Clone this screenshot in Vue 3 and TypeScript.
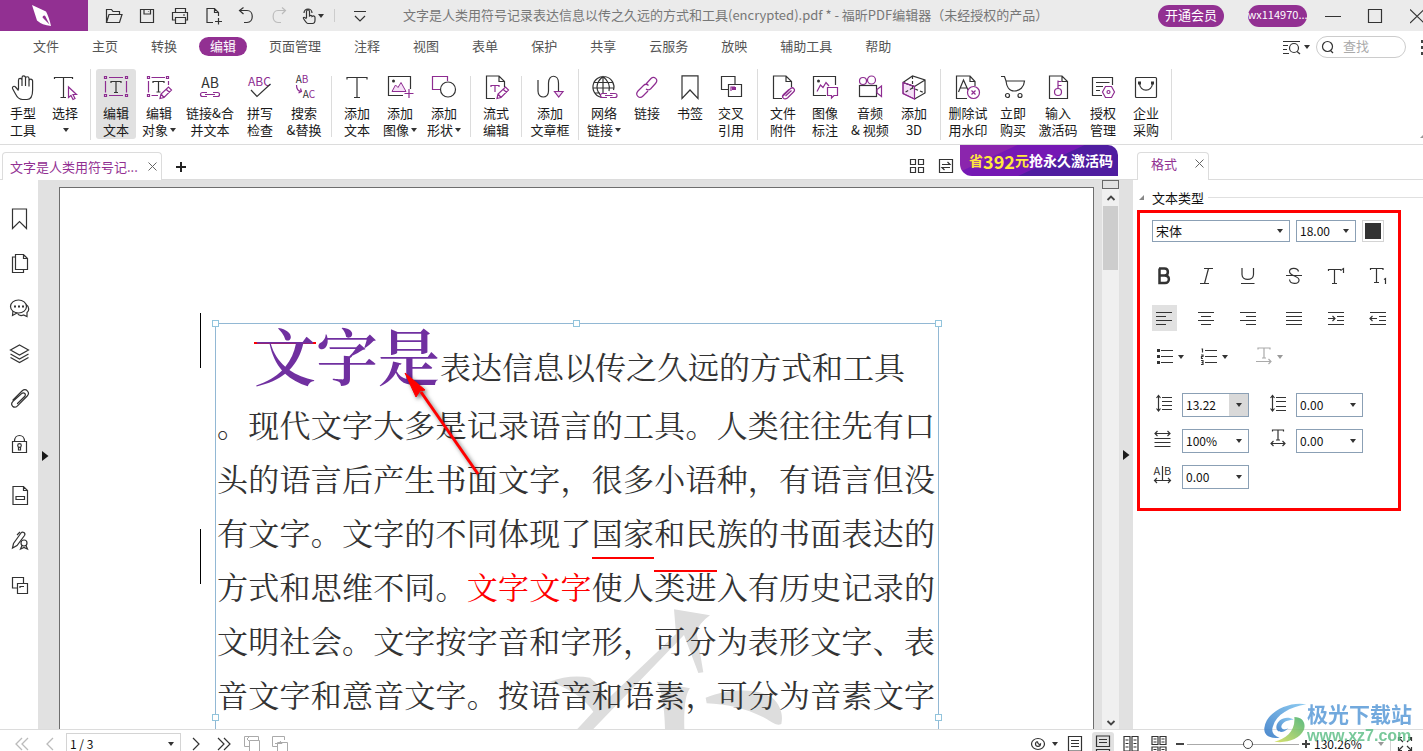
<script setup lang="ts">
import { ref } from 'vue'

interface Tool { icon: string; l1: string; l2?: string; w: number; drop?: boolean; active?: boolean }
interface Group { tools: Tool[]; short?: boolean; first?: boolean }

const K = 'stroke="#333" stroke-width="1.2" fill="none"'
const P = 'stroke="#8e2c91" stroke-width="1.2" fill="none"'
const BIGT = `<path ${K} d="M3 4.500V2.500H23V4.500M13 2.500V22.500M10 22.500H16"/>`
const PENCIL = `<path stroke="#8e2c91" stroke-width="1.200" fill="#fff" d="M14 23.500L15 19L22.500 12L25.500 15L18 22.500ZM15 19L18 22.500M20 14L23.500 17.500"/>`
const PAGE = `<path ${K} d="M12 23.500H3.500V1H16L21.500 6.500V12M16 1V6.500H21.500"/>`

const icons: Record<string, string> = {
  hand: `<path ${K} stroke-linejoin="round" d="M8.500 14.500V5.200a1.750 1.750 0 0 1 3.500 0V11M12 5V2.700a1.750 1.750 0 0 1 3.500 0V11M15.500 3.500a1.750 1.750 0 0 1 3.500 0V11.500M19 6a1.800 1.800 0 0 1 3.600 0V15C22.600 20 21.500 24.500 17 24.500H12.500C8.500 24.500 7 22 5.500 19L2.500 13.500C2 11.500 4.200 10.500 5.500 12L8.500 15.500"/>`,
  select: `<path ${K} d="M2.500 4V2.500H20.500V4M11.500 2.500V22.500M8.500 22.500H14"/><path stroke="#8e2c91" stroke-width="1.200" fill="#fff" d="M16.500 12V22.500L19 20.500L21 24.500L23 23.500L21 19.500H24.500Z"/>`,
  editText: `<path ${P} d="M6 2.500H20M6 20.500H20M2.500 6V17.500M23.500 6V17.500"/><path ${P} d="M1.500 1.500h2v2h-2zM22.500 1.500h2v2h-2zM1.500 19.500h2v2h-2zM22.500 19.500h2v2h-2z"/><path ${K} d="M8 8V6.500H18V8M13 6.500V17M11 17.500H15"/>`,
  editObj: `<path ${P} d="M5.500 2.500H19M2.500 6V17.500M5.500 20.500H12M22.500 6V10"/><path ${P} d="M1.500 1.500h2v2h-2zM20.500 1.500h2v2h-2zM1.500 19.500h2v2h-2z"/><path ${K} d="M7 8V6.500H18V8M12.500 6.500V17M10.500 17H14.500"/>${PENCIL}`,
  linkMerge: `<text x="13" y="12.500" text-anchor="middle" font-size="14" fill="#333" font-family="Noto Sans CJK SC">AB</text><path ${P} d="M10 17.500H5.500a2 2 0 0 0 0 4H10M16 17.500h4.500a2 2 0 0 1 0 4H16M8 19.500H18"/>`,
  spell: `<text x="12.500" y="11" text-anchor="middle" font-size="12" fill="#8e2c91" font-family="Noto Sans CJK SC">ABC</text><path ${K} d="M4 15L10 21.500L23.500 9"/>`,
  replace: `<text x="11" y="8" text-anchor="middle" font-size="10" fill="#333" font-family="Noto Sans CJK SC">A<tspan fill="#8e2c91">B</tspan></text><text x="18" y="23" text-anchor="middle" font-size="10" fill="#333" font-family="Noto Sans CJK SC">A<tspan fill="#8e2c91">C</tspan></text><path ${P} d="M5.500 10C5.500 13 6.500 16 10 16.500M7.500 18L10.500 16.500L9.500 13.500"/>`,
  bigT: BIGT,
  addImg: `<path ${K} d="M16 20.500H1.500V1.500H23.500V14"/><circle cx="6.500" cy="6" r="1.500" fill="#333"/><path stroke="#8e2c91" fill="#f5e0f7" d="M5 16.500L8.500 10L11 12.500L14 7.500L19 16.500Z"/><path ${P} stroke-width="1.500" d="M22 14V23M17.500 18.500H26.500"/>`,
  addShape: `<path ${P} d="M10 14.500H1.500V1.500H16.500V6"/><circle cx="17" cy="14.500" r="7.500" stroke="#333" stroke-width="1.200" fill="#fff"/>`,
  flow: `${PAGE}<path ${P} d="M8 12V10.500H16V12M12 10.500V16M12 16V17"/>${PENCIL}`,
  article: `<path ${K} d="M1 5V16C1 24 11.500 24 11.500 16V8C11.500 -1 21.500 -1 21.500 8V16"/><path stroke="#8e2c91" stroke-width="1.200" fill="#f5e0f7" d="M17.500 16.500H26L21.700 22Z"/>`,
  web: `<path ${K} d="M12 22.500A10.500 10.500 0 1 1 22.500 15M12 22.500C4 16 4 8 12 1.500C20 8 18.500 14 18 16M12 1.500V22M3 7.500H22M1.500 13H22M3.500 18H9"/><path stroke="#8e2c91" stroke-width="1.200" fill="#fff" d="M16 18.500H11.500a2 2 0 0 0 0 4H16M19 18.500h5a2 2 0 0 1 0 4H19M14 20.500H21.500"/>`,
  link: `<path ${P} stroke-width="1.500" d="M12 9L17 3.500C20 .5 25 4.500 21.500 8.500L16.500 14C15 15.200 13.500 15.200 12 14M14.500 10.500C13 9 11 9 9.500 10.500L4 16C.5 20 5.500 24.500 9 21L14 16"/>`,
  bookmark: `<path ${K} stroke-width="1.400" d="M5 .8H21V23.500L13 15L5 23.500Z"/>`,
  cross: `<path ${K} d="M10 14.500H3.500V1.500H17V9M10.500 9.500H23.500V21.500H10.500Z"/><path ${P} d="M17 12H13V16"/><path fill="#8e2c91" d="M14 12h4v3h-4z"/>`,
  attach: `${PAGE}<path ${P} stroke-width="1" d="M13 21L20.500 13.500C23 11.500 26 14.500 23.500 17L17.500 23C14 25.500 11 22 13.500 19.500L19 14.500M15.500 21L21.500 15.500"/>`,
  imgNote: `<path ${K} d="M14 20.500H1.500V1.500H23.500V10"/><circle cx="6.500" cy="6" r="1.500" fill="#333"/><path ${P} d="M5 16.500L8.500 10L11 12.500L14 7.500L17 11"/><path stroke="#8e2c91" stroke-width="1.200" fill="#fff" d="M15.500 12.500H25.500V20.500H22L19.500 23V20.500H15.500Z"/>`,
  video: `<circle cx="6" cy="6" r="3.500" ${P}/><circle cx="14.500" cy="5" r="4" ${P}/><rect x="2.500" y="10.500" width="17" height="11" ${K}/><path ${P} d="M20 14.500L24.500 11V21.500L20 18Z"/>`,
  cube: `<path fill="#f5e0f7" stroke="#8e2c91" d="M2 7.500L13.500 11.500V24L2 18.500Z"/><path ${K} d="M2 7.500L11.500 1L24 5V18L13.500 24M13.500 11.500L24 5M2 7.500L13.500 11.500"/><path ${K} stroke-dasharray="3 2" d="M11.500 1V13L24 18M11.500 13L2 18.500"/><path ${P} d="M2 7.500L13.500 11.500V24L2 18.500Z"/>`,
  rmMark: `<path ${K} d="M12 23.500H1.500V1H15L20 6.500V11M15 1V6.500H20M3.500 17L8.500 5L13 15M5 13H12"/><circle cx="18.500" cy="17.500" r="6" stroke="#8e2c91" stroke-width="1.200" fill="#fff"/><path ${P} d="M16.500 15.500L20.500 19.500M20.500 15.500L16.500 19.500"/>`,
  cart: `<path ${K} d="M1 1.500H4.500L6 6H24.500C24 12 20 16 14 16C9 16 6.500 11 6 6"/><circle cx="7.500" cy="20.500" r="2" ${K}/><circle cx="20" cy="20.500" r="2" ${K}/>`,
  code: `<path ${K} d="M4.500 1H17L22.500 6.500V23.500H4.500ZM17 1V6.500H22.500"/><circle cx="13" cy="17" r="3.500" ${P}/><path ${P} d="M13 13.500V5.500M13 6.500H16.500M13 10.500H16.500"/>`,
  auth: `<path ${K} d="M12 20.500H2.500V2.500H22.500V10M6 7.500H19.500M6 11.500H13M6 15.500H10"/><path stroke="#8e2c91" stroke-width="1.200" fill="#fff" d="M15.500 11.500H21.500L24.500 17L21.500 22.500H15.500L12.500 17Z"/><circle cx="18.500" cy="17" r="1.500" ${P}/>`,
  shop: `<rect x="2.500" y="2.500" width="21" height="20" rx="1" ${K}/><path ${K} d="M6.500 8C6.500 17.500 19.500 17.500 19.500 8"/><path fill="#333" d="M5 6.500h3v3h-3zM18 6.500h3v3h-3z"/>`,
  open: `<path ${K} d="M2.500 16V3.500H7.500L9 5.500H15.500V8M2.500 16.500L5 8.500H18L15.500 16.500Z"/>`,
  save: `<path ${K} d="M3.500 3.500H16.500V16.500H3.500ZM7 3.500V8H13.500V3.500M11.500 5.500V6"/>`,
  print: `<path ${K} d="M5.500 6.500V2.500H15.500V6.500M5.500 14H2.500V6.500H17.500V14H15.500M5.500 11.500H15.500V17.500H5.500ZM13 9H15"/>`,
  newDoc: `<path ${K} d="M10 16.500H4V2.500H11.500L15.500 6.500V10M11.500 2.500V6.500H15.500M15.500 12V18.500M12 15.500H19"/>`,
  undo: `<path ${K} stroke-width="1.400" d="M7.500 1.500L3.500 4.500L7.500 8M3.500 4.500H11C18 4.500 18 16.500 11 16.500H8"/>`,
  redo: `<path stroke="#bbb" stroke-width="1.200" fill="none" d="M13 1.500L16.500 4.500L13 8M16.500 4.500H9C2.500 4.500 2.500 16.500 9 16.500H12"/>`,
  touch: `<path ${K} d="M8.500 12V5.500a1.500 1.500 0 0 1 3 0V10C13 9 14 9.500 14 10.500C15.500 9.500 17 10 17 11.500V14C17 16 16 17.500 14.500 17.500H10C8.500 17.500 7 15 5.500 12.500C5 11 6.500 10.500 8.500 13M6 7A4 4 0 1 1 14 7"/>`,
  qmenu: `<path ${K} d="M4 5.500H16M5 10L10 15L15 10"/>`,
  sMark: `<path ${K} d="M3.500 1H17.500V20.500L10.500 13.500L3.500 20.500Z"/>`,
  sPages: `<path ${K} d="M6 4H3.500V19.500H14.500V17M6.500 1.500H14.500L18.500 5.500V16.500H6.500ZM14.500 1.500V5.500H18.500"/>`,
  sChat: `<ellipse cx="9.500" cy="8.500" rx="8" ry="6.500" ${K}/><path ${K} d="M4 13L3.500 17.500L8 15M17 6.500C21 9 20 13 18 14.500V18.500L14.500 17C12 18 9.500 17 8.500 15.500"/><path stroke="#333" stroke-width="2" stroke-dasharray="2 2" d="M5 8.500H15"/>`,
  sLayers: `<path ${K} d="M10.500 2L19.500 7L10.500 12L1.500 7ZM1.500 11L10.500 16L19.500 11M1.500 14.500L10.500 19.500L19.500 14.500"/>`,
  sClip: `<path ${K} stroke-linecap="round" d="M4 12L13 3C15 1.300 17 1.500 18.300 2.800C19.700 4.200 19.800 6.300 18.200 8L8.500 17.800C7 19.300 5 19.500 3.600 18.200C2.200 16.800 2.500 14.900 4 13.400L12.600 5.600C13.600 4.700 15 4.700 15.800 5.500C16.600 6.300 16.500 7.600 15.600 8.500L8.500 15.500"/>`,
  sLock: `<path ${K} d="M3.500 8.500H17.500V19.500H3.500ZM5.500 8.500C5.500 .5 15.500 .5 15.500 8.500"/><circle cx="10.500" cy="12.500" r="1.800" ${K}/><path ${K} d="M9.500 14V17H11.500V14"/>`,
  sForm: `<path ${K} d="M4 1.500H14.500L18.500 5.500V19.500H4ZM14.500 1.500V5.500H18.500M7 11.500H15.500V14.500H7Z"/>`,
  sSign: `<path ${K} d="M3.500 18L4.500 13.500L12 3C13.500 1 17 3 15.500 5.500L8 15.500ZM8 5L11 2"/><circle cx="15" cy="13" r="3" ${K}/><path ${K} d="M13 15.500L11.500 19L15 17.500L18.500 19L17 15.500"/>`,
  sCopy: `<path ${K} d="M8 13H3.500V2.500H14.500V8M8.500 8.500H18.500V18.500H8.500ZM11 13V11.500H15"/>`,
  bold: `<path fill="none" stroke="#333" stroke-width="2.500" d="M7 4.500H12.500C17 4.500 17 11.500 12.500 11.500H7.500M12.500 11.500C18.500 11.500 18 19 13 19H7.500V4.500"/>`,
  italic: `<path ${K} d="M10 4.500H19M6 19.500H15M14.500 4.500L10.500 19.500"/>`,
  under: `<path ${K} d="M6 4V10.500C6 17 17.500 17 17.500 10.500V4M5 19.500H18.500"/>`,
  strike: `<path ${K} d="M16.500 7.500C15.500 3 7.500 3.500 7.500 7.500C7.500 10 10 11 12.500 12C15 13 17.500 14 17 16.500C16.500 20.500 8 20.500 7.500 15.500M4 11.500H20"/>`,
  sup: `<path ${K} d="M4.500 7V5.500H17V7M10.500 5.500V19.500M8 19.500H13M18 5.500L19.500 4.500V9"/>`,
  sub: `<path ${K} d="M4.500 6V4.500H17V6M10.500 4.500V18.500M8 18.500H13M18 15.500L19.500 14.500V20"/>`,
  left: `<path ${K} d="M4 6.500H20M4 10.500H14M4 14.500H20M4 18.500H14"/>`,
  center: `<path ${K} d="M4 6.500H20M7 10.500H17M4 14.500H20M7 18.500H17"/>`,
  right: `<path ${K} d="M4 6.500H20M10 10.500H20M4 14.500H20M10 18.500H20"/>`,
  justify: `<path ${K} d="M4 6.500H20M4 10.500H20M4 14.500H20M4 18.500H20"/>`,
  indent: `<path ${K} d="M4 6.500H20M13 10.500H20M13 14.500H20M4 18.500H20M4 12.500H11M8.500 10L11 12.500L8.500 15"/>`,
  outdent: `<path ${K} d="M4 6.500H20M13 10.500H20M13 14.500H20M4 18.500H20M4 12.500H11M6.500 10L4 12.500L6.500 15"/>`,
  bullets: `<path ${K} d="M8 5.500H20M8 11.500H20M8 17.500H20"/><path fill="#333" d="M4 4h3v3H4zM4 10h3v3H4zM4 16h3v3H4z"/>`,
  numbers: `<path ${K} d="M8 5.500H20M8 11.500H20M8 17.500H20M4.500 4H5.500V7.500M4 10H6V11.500H4.500V13.500H6M4 15.500H6V19.500H4M4.500 17.500H6"/>`,
  tdir: `<path stroke="#aaa" stroke-width="1.200" fill="none" d="M6 4.500V3H18V4.500M12 3V13M10 13H14M4 16.500H19M16.500 14L19 16.500L16.500 19"/>`,
  lineH: `<path ${K} d="M10 4.500H20M10 8.500H20M10 12.500H20M10 16.500H20M6.500 3V17.500M4.500 5L6.500 2.500L8.500 5M4.500 15.500L6.500 18L8.500 15.500"/>`,
  paraH: `<path ${K} d="M10 4.500H20M10 8.500H20M10 13.500H20M10 17.500H20M6.500 3V17.500M4.500 5L6.500 2.500L8.500 5M4.500 15.500L6.500 18L8.500 15.500"/>`,
  scaleH: `<path ${K} d="M2.500 9.500H18.500M2.500 13.500H18.500M2.500 17.500H18.500M3 4.500H18M5.500 2L3 4.500L5.500 7M15.500 2L18 4.500L15.500 7"/>`,
  charS: `<path ${K} d="M6.500 2.500V1H17.500V2.500M12 1V11M10 11H14M5 14.500H19M7.500 12L5 14.500L7.500 17M16.500 12L19 14.500L16.500 17"/>`,
  wordS: `<text x="1.500" y="10" font-size="11" fill="#333" font-family="Noto Sans CJK SC">A</text><text x="12" y="10" font-size="11" fill="#333" font-family="Noto Sans CJK SC">B</text><path ${K} d="M10.500 1V15M2.500 15.500H18.500M5 13L2.500 15.500L5 18M16 13L18.500 15.500L16 18"/>`,
  first: `<path stroke="#bbb" stroke-width="1.300" fill="none" d="M10 4L4 10L10 16M16 4L10 10L16 16"/>`,
  prev: `<path stroke="#bbb" stroke-width="1.300" fill="none" d="M13 4L7 10L13 16"/>`,
  next: `<path ${K} stroke-width="1.500" d="M7 4L13 10L7 16"/>`,
  last: `<path ${K} stroke-width="1.500" d="M4 4L10 10L4 16M10 4L16 10L10 16"/>`,
  back: `<path stroke="#aaa" fill="none" d="M7 12.500H2.500V2.500H16.500V6M7.500 6.500H17.500V18H7.500ZM5 5L7 3M5 5L7 7"/>`,
  forth: `<path stroke="#aaa" fill="none" d="M7 12.500H2.500V2.500H14.500V6M7.500 8.500H17.500V18H7.500ZM5 9.500H12M10 7L12 9.500"/>`,
  eye: `<ellipse cx="10" cy="10" rx="6.500" ry="5.500" ${K}/><path ${K} d="M9.500 7.500A2.500 2.500 0 1 0 12.500 10C11 11 9.500 9.500 9.500 7.500"/>`,
  one: `<path ${K} d="M3.500 2.500H16.500V17H3.500ZM6 6.500H14M6 9.500H14M6 12.500H14"/>`,
  cont: `<path ${K} d="M3.500 2V12.500H16.500V2ZM6 5.500H14M6 8.500H14M3.500 20V15.500H16.500V20M6 17.500H14"/>`,
  two: `<path ${K} d="M3 2.500H9V17H3ZM11 2.500H17V17H11ZM4.500 6H7.500M4.500 9.500H7.500M4.500 13H7.500M12.500 6H15.500M12.500 9.500H15.500M12.500 13H15.500"/>`,
  four: `<path ${K} d="M3 2.500H9V10.500H3ZM11 2.500H17V10.500H11ZM3 20V13H9V20M11 20V13H17V20M4.500 5H7.500M4.500 8H7.500M12.500 5H15.500M12.500 8H15.500M4.500 15.500H7.500M12.500 15.500H15.500"/>`,
  full: `<path ${K} d="M8 8L3.500 3.500M3.500 7V3.500H7M12 8L16.500 3.500M13 3.500H16.500V7M8 12L3.500 16.500M3.500 13V16.500H7M12 12L16.500 16.500M13 16.500H16.500V13"/>`,
}

const quick = [['open', '打开'], ['save', '保存'], ['print', '打印'], ['newDoc', '新建'], ['undo', '撤销'], ['redo', '重做']]
const menus = ['文件', '主页', '转换', '编辑', '页面管理', '注释', '视图', '表单', '保护', '共享', '云服务', '放映', '辅助工具', '帮助']
const activeMenu = ref('编辑')

const groups: Group[] = [
  { first: true, tools: [{ icon: 'hand', l1: '手型', l2: '工具', w: 42 }, { icon: 'select', l1: '选择', w: 42, drop: true }] },
  { short: true, tools: [
    { icon: 'editText', l1: '编辑', l2: '文本', w: 40, active: true }, { icon: 'editObj', l1: '编辑', l2: '对象', w: 46, drop: true },
    { icon: 'linkMerge', l1: '链接&合', l2: '并文本', w: 56 }, { icon: 'spell', l1: '拼写', l2: '检查', w: 44 }, { icon: 'replace', l1: '搜索', l2: '&替换', w: 44 }] },
  { short: true, tools: [{ icon: 'bigT', l1: '添加', l2: '文本', w: 40 }, { icon: 'addImg', l1: '添加', l2: '图像', w: 46, drop: true }, { icon: 'addShape', l1: '添加', l2: '形状', w: 42, drop: true }] },
  { short: true, tools: [{ icon: 'flow', l1: '流式', l2: '编辑', w: 40 }] },
  { tools: [{ icon: 'article', l1: '添加', l2: '文章框', w: 46 }] },
  { tools: [{ icon: 'web', l1: '网络', l2: '链接', w: 40, drop: true }, { icon: 'link', l1: '链接', w: 46 }, { icon: 'bookmark', l1: '书签', w: 40 }, { icon: 'cross', l1: '交叉', l2: '引用', w: 42 }] },
  { tools: [{ icon: 'attach', l1: '文件', l2: '附件', w: 40 }, { icon: 'imgNote', l1: '图像', l2: '标注', w: 44 }, { icon: 'video', l1: '音频', l2: '& 视频', w: 46 }, { icon: 'cube', l1: '添加', l2: '3D', w: 42 }] },
  { tools: [{ icon: 'rmMark', l1: '删除试', l2: '用水印', w: 44 }, { icon: 'cart', l1: '立即', l2: '购买', w: 46 }, { icon: 'code', l1: '输入', l2: '激活码', w: 44 }, { icon: 'auth', l1: '授权', l2: '管理', w: 46 }, { icon: 'shop', l1: '企业', l2: '采购', w: 40 }] },
]

const side = [['sMark', '书签'], ['sPages', '页面'], ['sChat', '注释'], ['sLayers', '图层'], ['sClip', '附件'], ['sLock', '安全']]
const sideLower = [['sForm', '表单域'], ['sSign', '签名'], ['sCopy', '交叉引用']]
const styleBtns = [['bold', '粗体'], ['italic', '斜体'], ['under', '下划线'], ['strike', '删除线'], ['sup', '上标'], ['sub', '下标']]
const alignBtns = [['left', '左对齐'], ['center', '居中'], ['right', '右对齐'], ['justify', '两端对齐'], ['indent', '增加缩进'], ['outdent', '减少缩进']]
const fields = [
  { icon: 'lineH', name: '行距', value: '13.22', hot: true }, { icon: 'paraH', name: '段落间距', value: '0.00' },
  { icon: 'scaleH', name: '水平缩放', value: '100%' }, { icon: 'charS', name: '字符间距', value: '0.00' },
  { icon: 'wordS', name: '单词间距', value: '0.00' },
]
const views = [['one', '单页'], ['cont', '连续'], ['two', '对开'], ['four', '连续对开']]
const zoom = ref(55)
</script>

<template>
  <div class="app">
    <header class="titlebar">
      <div class="logo"><svg width="30" height="26" viewBox="0 0 30 26"><path fill="#fff" d="M6 2L20 8.500Q23 14 25 23Q16 22 11 17.500ZM17.500 15.500L23.500 21.500L19.500 13.500A1.500 1.500 0 1 0 17.500 15.500" fill-rule="evenodd" /></svg></div>
      <nav class="quick">
        <button v-for="q in quick" :key="q[0]" :aria-label="q[1]"><svg width="20" height="20" v-html="icons[q[0]]" /></button>
        <button class="touch" aria-label="触摸模式"><svg width="20" height="20" v-html="icons.touch" /><i class="tri" /></button>
        <span class="qsep" />
        <button class="qm" aria-label="自定义"><svg width="20" height="20" v-html="icons.qmenu" /></button>
      </nav>
      <h1>文字是人类用符号记录表达信息以传之久远的方式和工具(encrypted).pdf * - 福昕PDF编辑器（未经授权的产品）</h1>
      <div class="account">
        <button class="pill vip">开通会员</button>
        <button class="pill user">wx114970...</button>
        <button class="win" aria-label="最小化"><svg width="16" height="16"><path d="M0 8.500H16" stroke="#333" /></svg></button>
        <button class="win" aria-label="最大化"><svg width="16" height="16"><path d="M1.500 1.500H14.500V14.500H1.500Z" fill="none" stroke="#333" stroke-width="1.200" /></svg></button>
        <button class="win close" aria-label="关闭"><svg width="13" height="16"><path d="M0 1.500L14 15M0 15L14 1.500" stroke="#333" stroke-width="1.200" /></svg></button>
      </div>
    </header>

    <nav class="menubar">
      <button v-for="m in menus" :key="m" :class="{ on: m === activeMenu }" @click="activeMenu = m">{{ m }}</button>
      <div class="find">
        <button aria-label="高级查找"><svg width="20" height="16"><path d="M1 2.500H18M1 6.500H6M1 10.500H5M1 14.500H7" stroke="#333" stroke-width="1.200" /><circle cx="12" cy="9" r="4.500" fill="none" stroke="#333" stroke-width="1.200" /><path d="M15 12.500L18 15" stroke="#333" stroke-width="1.300" /></svg><i class="tri" /></button>
        <label class="search"><svg width="14" height="14"><circle cx="6.500" cy="6.500" r="5" fill="none" stroke="#333" stroke-width="1.200" /><path d="M9.500 10.500L12 13" stroke="#333" stroke-width="1.300" /></svg><input type="text" placeholder="查找" aria-label="查找" /></label>
        <svg class="dots" width="2" height="16"><path d="M0 1h2v3H0zM0 7h2v3H0zM0 13h2v3H0z" fill="#444" /></svg>
      </div>
    </nav>

    <section class="ribbon">
      <div v-for="(g, gi) in groups" :key="gi" class="group" :class="{ short: g.short, first: g.first }">
        <button v-for="t in g.tools" :key="t.icon" class="tool" :class="{ on: t.active }" :style="{ width: t.w + 'px' }">
          <svg width="26" height="26" overflow="visible" v-html="icons[t.icon]" />
          <span>{{ t.l1 }}</span>
          <span>{{ t.l2 }}<i v-if="t.drop" class="tri" /></span>
        </button>
      </div>
      <i class="corner" />
    </section>

    <main class="main">
      <div class="left">
        <div class="tabs">
          <div class="tab doc"><span>文字是人类用符号记...</span><button aria-label="关闭标签"><svg width="9" height="9"><path d="M.5 .5L8.500 8.500M8.500 .5L.5 8.500" stroke="#666" /></svg></button></div>
          <button class="plus" aria-label="新建标签"><svg width="10" height="10"><path d="M5 0V10M0 5H10" stroke="#222" stroke-width="2" /></svg></button>
          <div class="tabtools">
            <button aria-label="缩略图"><svg width="16" height="16"><path fill="none" stroke="#333" stroke-width="1.200" d="M1.500 1.500h5v5h-5zM9.500 1.500h5v5h-5zM1.500 9.500h5v5h-5zM9.500 9.500h5v5h-5z" /></svg></button>
            <button aria-label="切换"><svg width="16" height="16"><path fill="none" stroke="#333" stroke-width="1.200" d="M1.500 1.500H14.500V14.500H1.500ZM4 6.500H12L9.500 4M12 9.500H4L6.500 12" /></svg></button>
            <a href="#" class="promo"><b>省</b><b class="num">392</b><b>元</b><strong>抢永久激活码</strong></a>
          </div>
        </div>

        <div class="workspace">
          <aside class="side">
            <button v-for="s in side" :key="s[0]" :aria-label="s[1]"><svg width="22" height="22" v-html="icons[s[0]]" /></button>
            <div class="lower">
              <button v-for="s in sideLower" :key="s[0]" :aria-label="s[1]"><svg width="22" height="22" v-html="icons[s[0]]" /></button>
            </div>
          </aside>
          <button class="grip gl" aria-label="展开导航"><svg width="7" height="10"><path d="M0 0L6.500 5L0 10Z" fill="#1a1a1a" /></svg></button>
          <div class="canvas">
            <article class="sheet">
              <svg class="wm" width="420" height="169" viewBox="0 0 1260 507"><path fill="#ddd" d="M402 148L510 166Q475 190 470 220L490 337L475 339L432 225L160 507H112L160 455Q120 395 28 365Q90 342 150 353Q185 380 200 420L408 222ZM350 365L450 385Q430 410 433 507H375Q372 400 350 365ZM497 413C570 385 650 385 695 412C722 435 730 465 724 492C712 498 700 490 680 477C620 445 560 432 500 430Z" /></svg>
              <i class="bar b1" /><i class="bar b2" />
              <div class="textbox">
                <i class="h tl" /><i class="h tc" /><i class="h tr" /><i class="h bl" /><i class="h br" />
                <p class="lead"><b><span class="cut">文</span>字是</b><span class="rest">表达信息以传之久远的方式和工具</span></p>
                <p>。现代文字大多是记录语言的工具。人类往往先有口</p>
                <p>头的语言后产生书面文字，很多小语种，有语言但没</p>
                <p>有文字。文字的不同体现了<span class="ul">国家</span>和民族的书面表达的</p>
                <p>方式和思维不同。<em>文字文字</em>使人<span class="ol">类进</span>入有历史记录的</p>
                <p>文明社会。文字按字音和字形，可分为表形文字、表</p>
                <p>音文字和意音文字。按语音和语素，可分为音素文字</p>
              </div>
              <svg class="arrow" width="100" height="120"><path d="M20 22L77 104" stroke="#f00" stroke-width="3" /><path d="M4 3L24 20L19 21L15 27Z" fill="#f00" stroke="#f00" /></svg>
            </article>
          </div>
          <div class="scroll">
            <i class="split" />
            <button aria-label="向上"><svg width="10" height="8"><path d="M1.500 6L5 2.500L8.500 6" fill="none" stroke="#444" stroke-width="1.800" /></svg></button>
            <i class="thumb" />
            <button class="down" aria-label="向下"><svg width="10" height="8"><path d="M1.500 2L5 5.500L8.500 2" fill="none" stroke="#444" stroke-width="1.800" /></svg></button>
          </div>
          <button class="grip gr" aria-label="收起面板"><svg width="7" height="10"><path d="M0 0L6.500 5L0 10Z" fill="#1a1a1a" /></svg></button>
        </div>
      </div>

      <aside class="panel">
        <div class="tabs">
          <div class="tab fmt"><span>格式</span><button aria-label="关闭面板"><svg width="9" height="9"><path d="M.5 .5L8.500 8.500M8.500 .5L.5 8.500" stroke="#666" /></svg></button></div>
        </div>
        <h2><svg width="5" height="5"><path d="M5 0V5H0Z" fill="#888" /></svg>文本类型</h2>
        <section class="box">
          <div class="row fonts">
            <span class="sel name"><select aria-label="字体"><option>宋体</option></select><i class="tri" /></span>
            <span class="sel size"><select aria-label="字号"><option>18.00</option></select><i class="tri" /></span>
            <button class="swatch" aria-label="文字颜色"><i /></button>
          </div>
          <div class="row btns"><button v-for="b in styleBtns" :key="b[0]" :aria-label="b[1]"><svg width="24" height="24" v-html="icons[b[0]]" /></button></div>
          <div class="row btns"><button v-for="b in alignBtns" :key="b[0]" :aria-label="b[1]" :class="{ on: b[0] === 'left' }"><svg width="24" height="24" v-html="icons[b[0]]" /></button></div>
          <div class="row lists">
            <button aria-label="项目符号"><svg width="24" height="24" v-html="icons.bullets" /><i class="tri" /></button>
            <button aria-label="编号"><svg width="24" height="24" v-html="icons.numbers" /><i class="tri" /></button>
            <button class="off" aria-label="文字方向"><svg width="24" height="24" v-html="icons.tdir" /><i class="tri" /></button>
          </div>
          <div class="fields">
            <label v-for="f in fields" :key="f.icon"><svg width="24" height="24" overflow="visible" v-html="icons[f.icon]" /><span class="sel" :class="{ hot: f.hot }"><select :aria-label="f.name"><option>{{ f.value }}</option></select><i class="tri" /></span></label>
          </div>
        </section>
      </aside>
    </main>

    <footer class="status">
      <div class="inner">
        <button aria-label="第一页"><svg width="20" height="20" v-html="icons.first" /></button>
        <button aria-label="上一页"><svg width="20" height="20" v-html="icons.prev" /></button>
        <span class="sel pages"><select aria-label="页码"><option>1 / 3</option></select><i class="tri" /></span>
        <button aria-label="下一页"><svg width="20" height="20" v-html="icons.next" /></button>
        <button aria-label="最后一页"><svg width="20" height="20" v-html="icons.last" /></button>
        <button aria-label="上一视图"><svg width="20" height="20" v-html="icons.back" /></button>
        <button aria-label="下一视图"><svg width="20" height="20" v-html="icons.forth" /></button>
        <div class="right">
          <button class="eye" aria-label="阅读模式"><svg width="20" height="20" v-html="icons.eye" /><i class="tri" /></button>
          <button v-for="v in views" :key="v[0]" :aria-label="v[1]" :class="{ on: v[0] === 'cont' }"><svg width="20" height="20" v-html="icons[v[0]]" /></button>
          <button class="pm" aria-label="缩小"><svg width="10" height="10"><path d="M1 5H9" stroke="#444" stroke-width="2" /></svg></button>
          <input v-model="zoom" type="range" aria-label="缩放" />
          <button class="pm" aria-label="放大"><svg width="10" height="10"><path d="M1 5H9M5 1V9" stroke="#444" stroke-width="2" /></svg></button>
          <span class="sel pct"><select aria-label="缩放比例"><option>130.26%</option></select><i class="tri" /></span>
          <button aria-label="全屏"><svg width="20" height="20" v-html="icons.full" /></button>
        </div>
      </div>
    </footer>

    <div class="brand">
      <svg width="44" height="40" viewBox="0 0 132 120">
        <defs>
          <linearGradient id="sky" x1="0" y1="1" x2="1" y2="0"><stop offset="0" stop-color="#2e74c4" /><stop offset="1" stop-color="#7cc4f0" /></linearGradient>
          <linearGradient id="leaf" x1="0" y1="1" x2="1" y2="0"><stop offset="0" stop-color="#d5dd55" /><stop offset="1" stop-color="#3fae6a" /></linearGradient>
        </defs>
        <path fill="url(#sky)" d="M130 4C80 -6 10 25 4 75C2 98 22 108 50 104C30 98 24 85 30 70C40 35 80 12 130 4Z" />
        <path fill="url(#sky)" d="M92 50C70 36 42 50 40 72C40 90 62 92 76 76C66 82 54 80 55 70C58 56 76 50 92 50Z" />
        <path fill="url(#leaf)" d="M94 42C120 42 130 62 122 82C110 108 70 122 34 116C70 108 98 84 94 42Z" />
      </svg>
      <div><strong>极光下载站</strong><span>www.xz7.com</span></div>
    </div>
  </div>
</template>

<style>
html, body { margin: 0; overflow: hidden; }
</style>

<style scoped>
.app { position: relative; height: 100vh; display: flex; flex-direction: column; overflow: hidden; background: #fff; color: #222; font: 13px/17px "Noto Sans CJK SC", "Noto Sans", sans-serif; }
.app * { box-sizing: border-box; }
button { border: 0; padding: 0; margin: 0; background: none; color: inherit; font: inherit; display: flex; align-items: center; justify-content: center; flex: none; }
svg { display: block; flex: none; }
h1, h2, p { margin: 0; font-weight: 400; }
.tri { display: inline-block; flex: none; width: 0; height: 0; border: solid transparent; border-width: 4px 3px 0; border-top-color: #333; }

.titlebar { height: 31px; flex: none; display: flex; align-items: center; background: #ebebeb; color: #777; white-space: nowrap; }
.logo { width: 88px; height: 31px; flex: none; background: #923092; display: flex; align-items: center; justify-content: center; padding-right: 6px; }
.quick { display: flex; align-items: center; flex: none; padding-left: 9px; }
.quick button { width: 33px; height: 31px; }
.quick .touch { width: 31px; }
.qsep { width: 1px; height: 13px; background: #ccc; margin: 0 8px; }
h1 { font-size: 13px; margin-left: 27px; padding-bottom: 2px; overflow: hidden; flex: 0 1 auto; }
.account { display: flex; align-items: center; margin-left: auto; flex: none; }
.pill { background: #923092; color: #fff; border-radius: 11px; height: 22px; padding-bottom: 2px; }
.vip { width: 66px; margin-right: 24px; }
.user { width: 59px; font-size: 11px; margin-right: 5px; }
.win { width: 42px; height: 31px; }
.win.close { width: 27px; justify-content: flex-end; }

.menubar { height: 31px; flex: none; display: flex; align-items: center; gap: 11px; padding-left: 22px; color: #555; }
.menubar > button { height: 19px; padding: 0 11px 2px; border-radius: 10px; }
.menubar > button.on { background: #923092; color: #fff; }
.find { margin-left: auto; display: flex; align-items: center; }
.find button { gap: 2px; margin-right: 6px; }
.search { width: 90px; height: 22px; border: 1px solid #ccc; border-radius: 11px; display: flex; align-items: center; padding-left: 4px; gap: 8px; }
.search input { width: 56px; border: 0; padding: 0 0 2px; outline: 0; background: none; font: inherit; color: #333; }
.search input::placeholder { color: #aaa; }
.dots { margin-left: 15px; }

.ribbon { position: relative; height: 83px; flex: none; display: flex; align-items: flex-start; padding-top: 7px; border-bottom: 1px solid #dcdcdc; }
.group { position: relative; display: flex; padding: 0 6px 0 5px; height: 71px; }
.group.first { padding: 0 5px 0 2px; }
.group::after { content: ""; position: absolute; right: 0; top: 0; bottom: 0; width: 1px; background: #dcdcdc; }
.group.short::after { top: 7px; bottom: 3px; }
.tool { flex-direction: column; justify-content: flex-start; padding-top: 6px; border-radius: 3px; white-space: nowrap; color: #1a1a1a; height: 70px; }
.tool.on { background: #e1e1e1; }
.tool svg { margin-bottom: 3px; }
.tool span { display: flex; align-items: center; height: 17px; }
.tool span .tri { margin-left: 2px; }
.corner { position: absolute; right: 0; bottom: 6px; border-style: solid; border-width: 0 0 3px 3px; border-color: transparent transparent #999; }

.main { flex: 1; min-height: 0; display: flex; }
.left { flex: 1; min-width: 0; display: flex; flex-direction: column; }
.tabs { height: 35px; flex: none; display: flex; align-items: flex-end; border-bottom: 1px solid #dcdcdc; }
.tab { height: 28px; margin-bottom: -1px; border: 1px solid #dcdcdc; border-bottom: 0; border-radius: 4px 4px 0 0; background: #fff; color: #923092; display: flex; align-items: center; justify-content: space-between; }
.tab.doc { width: 160px; margin-left: 2px; padding: 0 4px 0 7px; }
.tab.fmt { width: 72px; margin-left: 4px; padding: 0 4px 6px 13px; }
.plus { width: 37px; height: 25px; }
.tabtools { margin-left: auto; align-self: flex-start; display: flex; padding-right: 15px; }
.tabtools button { width: 29px; height: 41px; }
.promo { height: 31px; width: 158px; display: flex; align-items: center; justify-content: center; padding-left: 4px; color: #fff; text-decoration: none; font-size: 14px; border-radius: 0 10px 0 12px; background: linear-gradient(155deg, #8b25ad 0 25%, #7518b4 26% 55%, #4f1da0 56%); white-space: nowrap; }
.promo b { color: #ffe93c; }
.promo .num { font: 700 18px/20px "Noto Sans CJK SC", sans-serif; }

.workspace { flex: 1; min-height: 0; display: flex; background: #e1e1e1; }
.side { width: 38px; flex: none; background: #fff; display: flex; flex-direction: column; align-items: center; padding-top: 16px; }
.side button { width: 38px; height: 45px; padding-left: 2px; }
.lower { margin-top: 7px; }
.grip { width: 14px; align-self: stretch; }
.gl { padding: 3px 0 0 1px; }
.gr { background: #e1e1e1; }
.canvas { flex: 1; min-width: 0; overflow: hidden; padding: 7px 8px 0 7px; }
.sheet { position: relative; height: 1200px; border: 1px solid #6e6e6e; background: #fff; }
.wm { position: absolute; left: 480px; top: 372px; }
.bar { position: absolute; left: 140px; width: 1px; height: 55px; background: #000; }
.b1 { top: 125px; }
.b2 { top: 341px; }
.textbox { position: absolute; z-index: 1; left: 155px; top: 135px; width: 724px; height: 700px; border: 1px solid #92b8d4; padding: 0 3px 0 1px; color: #333; font-family: "Noto Serif CJK SC", "Noto Sans CJK SC", serif; font-weight: 300; }
.textbox p { font-size: 31px; line-height: 54px; height: 54px; white-space: nowrap; text-align: justify; text-align-last: justify; }
.textbox .lead { display: flex; align-items: flex-start; height: 73px; padding-left: 37px; text-align: left; text-align-last: left; }
.lead b { font-size: 62px; line-height: 62px; font-weight: 600; color: #7030a0; }
.lead .rest { line-height: 84px; }
.textbox em { font-style: normal; color: #f00; }
.cut, .ul, .ol { position: relative; }
.cut::before, .ul::after, .ol::after { content: ""; position: absolute; left: 0; right: 0; height: 2px; background: #f00; }
.cut::before { top: 32px; z-index: -1; }
.ul::after { bottom: -5px; }
.ol::after { top: 7px; }
.h { position: absolute; width: 7px; height: 7px; border: 1px solid #92c4dc; background: #fff; }
.tl { left: -4px; top: -4px; }
.tc { left: 357px; top: -4px; }
.tr { right: -4px; top: -4px; }
.bl { left: -4px; top: 390px; }
.br { right: -4px; top: 390px; }
.arrow { position: absolute; z-index: 2; left: 341px; top: 182px; filter: drop-shadow(2px 2px 2px rgba(0, 0, 0, .55)); }
.scroll { width: 17px; flex: none; background: #f0f0f0; display: flex; flex-direction: column; }
.split { height: 9px; flex: none; border: 1px solid #666; background: #e1e1e1; }
.scroll button { height: 17px; }
.thumb { height: 64px; margin: 0 1px; background: #cdcdcd; }
.scroll .down { margin-top: auto; height: 13px; }

.panel { width: 290px; flex: none; }
h2 { display: flex; align-items: center; gap: 8px; height: 30px; padding: 4px 0 0 6px; font-size: 13px; color: #111; }
h2::after { content: ""; flex: 1; height: 1px; background: #e0e0e0; margin-left: -4px; }
.box { width: 264px; margin-left: 4px; border: 3px solid #f00; padding: 7px 0 19px 12px; }
.row { display: flex; }
.sel { position: relative; display: flex; align-items: center; border: 1px solid #8ba0b5; background: #fff; }
.sel select { position: relative; appearance: none; width: 100%; height: 100%; border: 0; padding: 0 0 1px 3px; background: none; font: 12px/16px "Noto Sans CJK SC", "Noto Sans", sans-serif; color: #111; outline: 0; }
.sel .tri { position: absolute; right: 6px; }
.fonts { gap: 6px; height: 22px; }
.fonts .name { width: 138px; }
.fonts .name select { font-size: 13px; }
.fonts .size { width: 60px; }
.swatch { width: 22px; height: 22px; border: 1px solid #d4d4d4; }
.swatch i { width: 16px; height: 16px; background: #333; }
.btns { gap: 17px; margin-top: 21px; }
.btns + .btns { margin-top: 16px; }
.btns button { width: 25px; height: 26px; justify-content: flex-start; }
.btns button:nth-child(4) { margin-left: 4px; }
.btns .on { background: #e1e1e1; }
.lists { gap: 11px; margin-top: 14px; height: 24px; }
.lists button { gap: 1px; width: 33px; }
.lists .off { margin-left: 11px; }
.off .tri { border-top-color: #999; }
.fields { display: grid; grid-template-columns: 97px 114px; gap: 12px 17px; margin-top: 24px; }
.fields label { display: flex; justify-content: space-between; height: 24px; }
.fields label:nth-child(even) { width: 97px; }
.fields .sel { width: 67px; height: 24px; }
.sel.hot::before { content: ""; position: absolute; right: 0; top: 0; bottom: 0; width: 19px; background: #d9d9d9; }

.status { height: 22px; flex: none; overflow: hidden; border-top: 1px solid #dcdcdc; background: #fff; }
.inner { height: 28px; display: flex; align-items: center; padding-left: 8px; }
.inner button { width: 28px; height: 24px; }
.pages { width: 115px; height: 22px; border-color: #d4d4d4; margin: 0 1px 0 2px; }
.right { margin-left: auto; display: flex; align-items: center; padding-right: 4px; }
.right .on { background: #e1e1e1; border-radius: 3px; width: 22px; margin: 0 3px; }
.right .eye { width: 34px; gap: 4px; margin-right: 1px; }
.right .pm { width: 14px; }
.right input { appearance: none; width: 112px; height: 12px; margin: 0; background: linear-gradient(#aaa, #aaa) center / 100% 1px no-repeat; }
.right input::-webkit-slider-thumb { appearance: none; width: 10px; height: 10px; border: 1px solid #444; border-radius: 50%; background: #fff; }
.pct { width: 78px; height: 22px; border: solid #d4d4d4; border-width: 0 1px 0 0; }
.pct select { padding-left: 1px; }
.pct .tri { border-top-color: #999; }

.brand { position: absolute; right: 11px; bottom: 6px; display: flex; align-items: center; opacity: .85; pointer-events: none; }
.brand div { display: flex; flex-direction: column; }
.brand strong { font-size: 21px; line-height: 25px; color: #5a9bd8; }
.brand span { font: 700 16px/19px "Liberation Sans", sans-serif; color: #62c08a; }
</style>
